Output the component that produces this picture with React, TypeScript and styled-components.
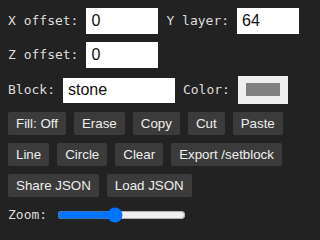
import React, { useState } from "react";
import styled, { createGlobalStyle } from "styled-components";

const GlobalStyle = createGlobalStyle`
  html, body {
    margin: 0;
    background: #222;
  }
  body {
    font-family: "DejaVu Sans Mono", monospace;
    font-size: 13px;
    color: #ddd;
  }
`;

const Panel = styled.div`
  display: flex;
  flex-direction: column;
  gap: 8px;
  padding: 8px;
`;

const Row = styled.div`
  display: flex;
  align-items: center;
  gap: 8px;
`;

const Label = styled.label`
  white-space: pre;
  line-height: 16px;
`;

const TextInput = styled.input<{ $w: number; $h?: number }>`
  box-sizing: border-box;
  width: ${(p) => p.$w}px;
  height: ${(p) => p.$h ?? 26}px;
  border: none;
  border-radius: 0;
  padding: 0 5px;
  background: #fff;
  color: #111;
  font-family: "Liberation Sans", Arial, sans-serif;
  font-size: 16px;
  outline: none;
`;

const ColorInput = styled.input`
  box-sizing: border-box;
  width: 50px;
  height: 28px;
  padding: 0;
  border: none;
  background: #efefef;
  cursor: pointer;

  &::-webkit-color-swatch-wrapper {
    padding: 7px 8px 8px;
  }
  &::-webkit-color-swatch {
    border: none;
    border-radius: 0;
  }
`;

const ButtonRow = styled.div`
  display: flex;
  flex-wrap: wrap;
  gap: 8px;
`;

const ToolButton = styled.button`
  height: 23px;
  padding: 0 8px;
  border: none;
  border-radius: 2px;
  background: #3b3b3b;
  color: #eee;
  font-family: "Liberation Sans", Arial, sans-serif;
  font-size: 13.33px;
  cursor: pointer;
`;

const Slider = styled.input`
  width: 129px;
  margin: 2px;
  accent-color: #0075ff;
`;

export default function App() {
  const [x, setX] = useState("0");
  const [y, setY] = useState("64");
  const [z, setZ] = useState("0");
  const [block, setBlock] = useState("stone");
  const [color, setColor] = useState("#808080");
  const [zoom, setZoom] = useState(43.75);

  return (
    <>
      <GlobalStyle />
      <Panel>
        <Row>
          <Label>X offset:</Label>
          <TextInput $w={72} value={x} onChange={(e) => setX(e.target.value)} />
          <Label>Y layer:</Label>
          <TextInput $w={62} value={y} onChange={(e) => setY(e.target.value)} />
        </Row>
        <Row>
          <Label>Z offset:</Label>
          <TextInput $w={72} value={z} onChange={(e) => setZ(e.target.value)} />
        </Row>
        <Row>
          <Label>Block:</Label>
          <TextInput $w={112} $h={25} value={block} onChange={(e) => setBlock(e.target.value)} />
          <Label>Color:</Label>
          <ColorInput type="color" value={color} onChange={(e) => setColor(e.target.value)} />
        </Row>
        <ButtonRow>
          <ToolButton>Fill: Off</ToolButton>
          <ToolButton>Erase</ToolButton>
          <ToolButton>Copy</ToolButton>
          <ToolButton>Cut</ToolButton>
          <ToolButton>Paste</ToolButton>
        </ButtonRow>
        <ButtonRow>
          <ToolButton>Line</ToolButton>
          <ToolButton>Circle</ToolButton>
          <ToolButton>Clear</ToolButton>
          <ToolButton>Export /setblock</ToolButton>
        </ButtonRow>
        <ButtonRow>
          <ToolButton>Share JSON</ToolButton>
          <ToolButton>Load JSON</ToolButton>
        </ButtonRow>
        <Row>
          <Label>Zoom:</Label>
          <Slider
            type="range"
            min={0}
            max={100}
            step={0.25}
            value={zoom}
            onChange={(e) => setZoom(Number(e.target.value))}
          />
        </Row>
      </Panel>
    </>
  );
}
